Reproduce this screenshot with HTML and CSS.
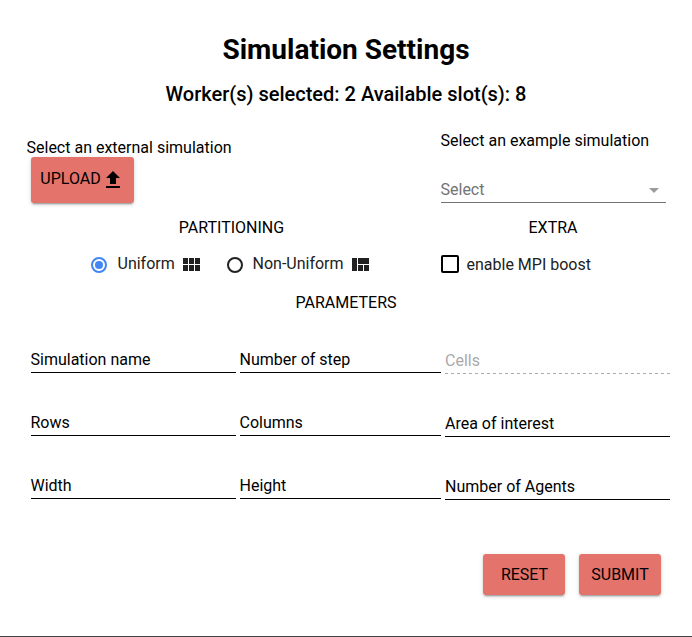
FILE: index.html
```html
<!DOCTYPE html>
<html lang="en">
<head>
<meta charset="utf-8">
<title>Simulation Settings</title>
<link rel="stylesheet" href="styles.css">
</head>
<body>
<main class="panel">
  <h1 class="title">Simulation Settings</h1>
  <h2 class="subtitle">Worker(s) selected: 2 Available slot(s): 8</h2>
  <section class="sources">
    <div class="external">
      <div class="label">Select an external simulation</div>
      <button class="button upload"><span class="upload-text">UPLOAD</span>
        <svg class="icon" viewBox="0 0 24 24"><path d="M5 20h14v-2H5v2zM5 10h4v6h6v-6h4l-7-7-7 7z"/></svg>
      </button>
    </div>
    <div class="example">
      <div class="label">Select an example simulation</div>
      <div class="select"><span>Select</span>
        <svg class="icon" viewBox="0 0 24 24"><path d="M7 10l5 5 5-5z"/></svg>
      </div>
    </div>
  </section>
  <section class="headings">
    <div class="heading">PARTITIONING</div>
    <div class="heading">EXTRA</div>
  </section>
  <section class="options">
    <label class="option uniform"><span class="radio checked"></span><span>Uniform</span>
      <svg class="icon" viewBox="0 0 24 24"><path d="M4 11h5V5H4v6zm0 7h5v-6H4v6zm6 0h5v-6h-5v6zm6 0h5v-6h-5v6zm-6-7h5V5h-5v6zm6-6v6h5V5h-5z"/></svg>
    </label>
    <label class="option non-uniform"><span class="radio"></span><span>Non-Uniform</span>
      <svg class="icon" viewBox="0 0 24 24"><path d="M10 18h5v-6h-5v6zm-6 0h5V5H4v13zm12 0h5v-6h-5v6zM10 5v6h11V5H10z"/></svg>
    </label>
    <label class="option boost"><span class="checkbox"></span><span class="boost-text">enable MPI boost</span></label>
  </section>
  <div class="heading parameters">PARAMETERS</div>
  <section class="fields">
    <div class="field">Simulation name</div>
    <div class="field">Number of step</div>
    <div class="field low disabled">Cells</div>
    <div class="field">Rows</div>
    <div class="field">Columns</div>
    <div class="field low">Area of interest</div>
    <div class="field">Width</div>
    <div class="field">Height</div>
    <div class="field low">Number of Agents</div>
  </section>
  <footer class="actions">
    <button class="button reset">RESET</button>
    <button class="button">SUBMIT</button>
  </footer>
</main>
</body>
</html>
```
FILE: styles.css
```css
* { box-sizing: border-box; }

body {
  margin: 0;
  background: #fff;
  color: #000;
  font: 16px/24px Roboto, sans-serif;
}

.panel {
  display: flex;
  flex-direction: column;
  height: 637px;
  padding-top: 30px;
  border-bottom: 1px solid #424246;
  overflow: hidden;
}

.title,
.subtitle { margin: 0; text-align: center; }
.title { font-size: 28px; line-height: 40px; font-weight: 700; }
.subtitle { margin-top: 10px; font-size: 20px; line-height: 28px; font-weight: 500; }

.icon { display: block; width: 24px; height: 24px; fill: currentColor; flex: none; }

.sources {
  display: grid;
  grid-template-columns: 414px 225px;
  padding: 21px 0 0 27px;
  height: 108px;
}
.external { padding-top: 7px; }
.label { margin-left: -0.5px; }

.button {
  display: flex;
  align-items: center;
  justify-content: center;
  width: 82px;
  height: 41px;
  padding: 0;
  border: 0;
  border-radius: 3px;
  background: #e4736b;
  color: #000;
  font: inherit;
  box-shadow: 0 2px 2px rgba(0, 0, 0, .14), 0 1px 5px rgba(0, 0, 0, .12), 0 3px 1px -2px rgba(0, 0, 0, .2);
}
.upload { width: 103px; height: 46px; margin: -3px 0 0 4px; }
.upload-text { padding-bottom: 2px; }
.reset { padding-left: 1px; }

.select {
  display: flex;
  justify-content: space-between;
  height: 25px;
  margin-top: 25px;
  border-bottom: 1px solid #737373;
  color: #737373;
}
.select span { margin-left: -0.5px; }
.select .icon { color: #9b9b9b; }

.headings { display: grid; grid-template-columns: 409px 234px; padding-left: 27px; }
.heading { text-align: center; }
.parameters { margin-top: 15px; }

.options { display: flex; height: 25px; margin-top: 11px; padding-left: 91px; color: #212121; }
.option { display: flex; align-items: center; }
.uniform { width: 136px; }
.non-uniform { width: 214px; }
.radio {
  display: flex;
  align-items: center;
  justify-content: center;
  width: 16px;
  height: 16px;
  margin: 2px 9.5px 0 0;
  border: 2px solid #212121;
  border-radius: 50%;
}
.uniform .radio { margin-right: 10.5px; }
.checked { border-color: #4285f4; }
.checked::before { content: ""; width: 8px; height: 8px; border-radius: 50%; background: #4285f4; }
.option .icon { margin: 2px 0 0 4.5px; }
.checkbox { width: 18px; height: 18px; margin-right: 7.5px; border: 2px solid #000; border-radius: 2px; }
.boost-text { padding-top: 2px; }

.fields {
  display: grid;
  grid-template-columns: 205px 201px 225px;
  column-gap: 4px;
  grid-auto-rows: 63px;
  padding: 33px 0 0 31px;
}
.field { height: 25px; border-bottom: 1px solid #000; text-indent: -0.5px; }
.low { margin-top: 1px; text-indent: 0; }
.disabled {
  border-bottom: 0;
  background: repeating-linear-gradient(90deg, #aaa 0 3px, transparent 3px 6px) bottom / 100% 1px no-repeat;
  color: #aaa;
}

.actions { display: flex; justify-content: flex-end; gap: 14px; padding: 17px 31px 0 0; }
```
